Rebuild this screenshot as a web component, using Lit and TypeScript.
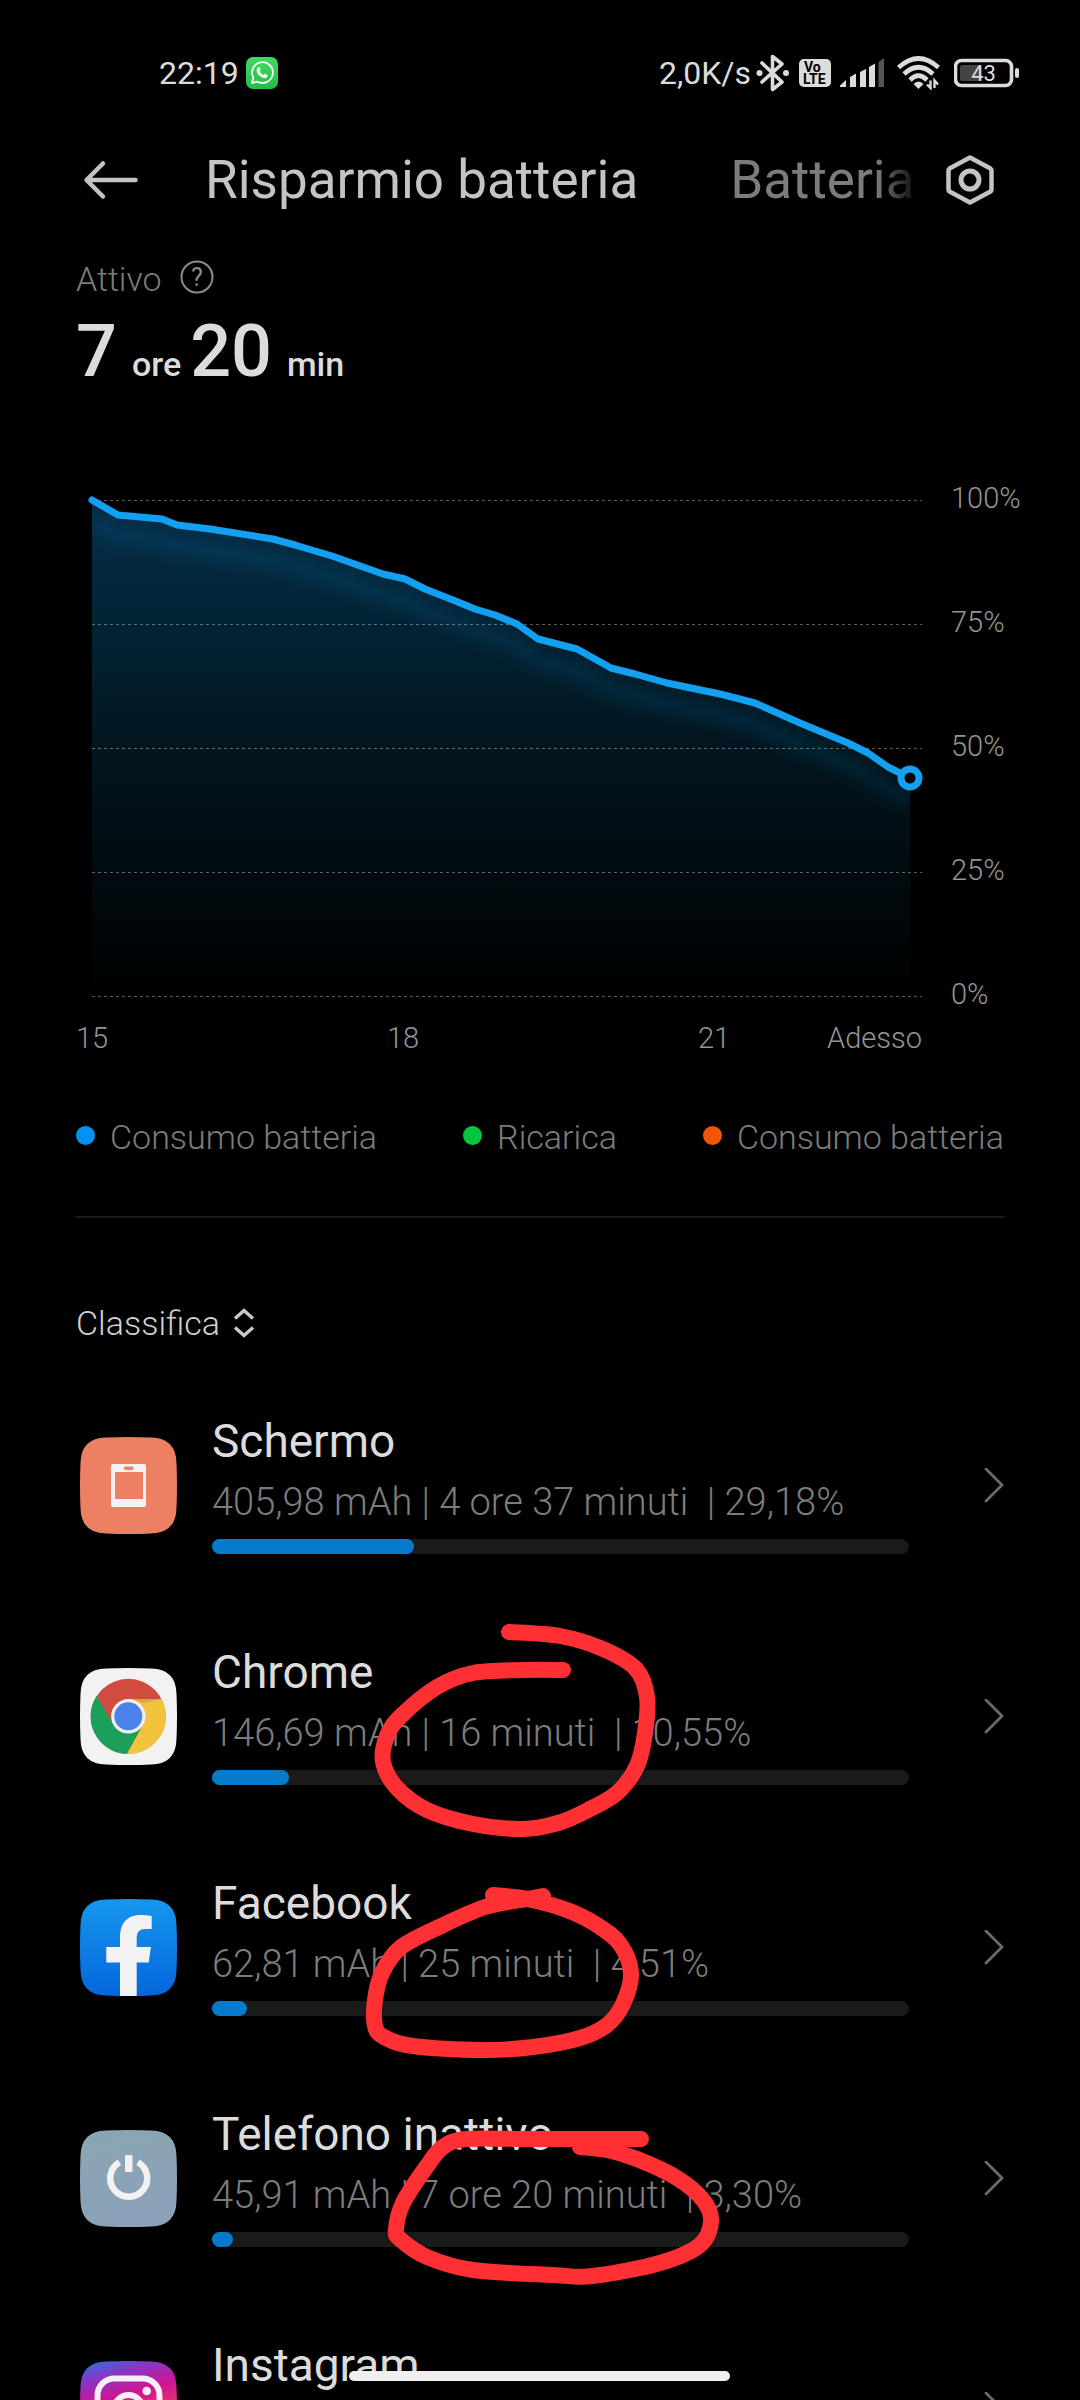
import { LitElement, html, css, svg } from "lit";
import { customElement, property } from "lit/decorators.js";

type Point = [number, number];

interface Usage {
  id: string;
  name: string;
  detail: string;
  share: number;
}

/** Battery level over time, in plot units (830 wide, 496 high). */
const LEVELS: Point[] = [
  [0, 0], [26, 15], [70, 19], [85, 25], [118, 29], [181, 39], [203, 45],
  [240, 56], [291, 74], [313, 79], [333, 89], [361, 100], [383, 109],
  [403, 115], [425, 124], [446, 139], [485, 149], [519, 168], [543, 174],
  [575, 183], [628, 194], [663, 203], [708, 223], [756, 243], [776, 253],
  [796, 267], [808, 273], [818, 278],
];

const USAGES: Usage[] = [
  { id: "screen", name: "Schermo", detail: "405,98 mAh | 4 ore 37 minuti  | 29,18%", share: 29 },
  { id: "chrome", name: "Chrome", detail: "146,69 mAh | 16 minuti  | 10,55%", share: 11 },
  { id: "facebook", name: "Facebook", detail: "62,81 mAh | 25 minuti  | 4,51%", share: 5 },
  { id: "idle", name: "Telefono inattivo", detail: "45,91 mAh | 7 ore 20 minuti  | 3,30%", share: 3 },
  { id: "instagram", name: "Instagram", detail: "", share: 2 },
];

/** Freehand marker strokes. */
const MARKS: Point[][] = [
  [
    [509, 1632], [560, 1636], [603, 1649], [636, 1669], [647, 1697], [645, 1733],
    [637, 1766], [617, 1793], [588, 1810], [558, 1823], [523, 1829], [473, 1824],
    [427, 1810], [397, 1788], [383, 1762], [387, 1736], [401, 1716], [437, 1687],
    [473, 1673], [523, 1670], [563, 1670],
  ],
  [
    [493, 1895], [527, 1899], [567, 1910], [597, 1925], [620, 1944], [631, 1973],
    [623, 2004], [607, 2025], [580, 2038], [533, 2047], [483, 2050], [413, 2046],
    [384, 2037], [375, 2026], [375, 2000], [382, 1973], [400, 1948], [437, 1928],
    [485, 1907], [527, 1899], [543, 1896],
  ],
  [
    [580, 2147], [607, 2150], [637, 2159], [677, 2178], [703, 2200], [711, 2221],
    [700, 2245], [660, 2263], [593, 2276], [553, 2275], [473, 2270], [427, 2257],
    [400, 2239], [396, 2229], [403, 2203], [427, 2166], [443, 2147], [467, 2139],
    [527, 2139], [641, 2139],
  ],
];

/** Joins the points with a Catmull-Rom curve, written as cubic segments. */
function smooth(points: Point[]): string {
  let d = `M${points[0][0]} ${points[0][1]}`;
  for (let i = 0; i < points.length - 1; i++) {
    const a = points[Math.max(i - 1, 0)];
    const b = points[i];
    const c = points[i + 1];
    const e = points[Math.min(i + 2, points.length - 1)];
    d += ` C${b[0] + (c[0] - a[0]) / 6} ${b[1] + (c[1] - a[1]) / 6}`;
    d += ` ${c[0] - (e[0] - b[0]) / 6} ${c[1] - (e[1] - b[1]) / 6} ${c[0]} ${c[1]}`;
  }
  return d;
}

@customElement("status-bar")
class StatusBar extends LitElement {
  static styles = css`
    :host { display: block; }
    .bar {
      display: flex;
      align-items: center;
      height: 38px;
      padding: 54px 60px 50px 159px;
      font-size: 32px;
      color: #dcdcdc;
    }
    .whatsapp { margin-left: 7px; }
    .space { flex: 1; }
    svg { display: block; flex: none; }
    .bluetooth { margin-left: 5px; }
    .volte { margin-left: 9px; }
    .signal { margin-left: 9px; }
    .wifi { margin-left: 12px; }
    .battery { margin-left: 14px; }
    .volte text { font: 700 14px Roboto, sans-serif; }
    .battery text { font: 400 22px Roboto, sans-serif; }
  `;

  render() {
    return html`
      <div class="bar">
        <span>22:19</span>
        <svg class="whatsapp" width="32" height="32" viewBox="0 0 32 32" aria-hidden="true">
          <defs>
            <linearGradient id="wa" x1="0" y1="0" x2="0" y2="1">
              <stop offset="0" stop-color="#45d765" /><stop offset="1" stop-color="#25bd45" />
            </linearGradient>
          </defs>
          <rect width="32" height="32" rx="7" fill="url(#wa)" />
          <path d="M6 26 L7.4 20.6 A10.4 10.4 0 1 1 11.4 24.6 Z" fill="none" stroke="#f2fff4" stroke-width="1.8" stroke-linejoin="round" />
          <path d="M12 10.4 c.5-.5 1.4-.4 1.7.2 l1 2.2 c.2.5-.5 1.2-.9 1.7 .8 1.7 2 2.8 3.7 3.5 .5-.5 1-1.4 1.6-1.2 l2.2 1.1 c.6.3.5 1 .2 1.6 -.7 1.4-2.3 1.9-3.8 1.5 -3.5-1-6.1-3.5-7-6.8 -.3-1.5.2-2.9 1.3-3.8z" fill="#f2fff4" />
        </svg>
        <span class="space"></span>
        <span>2,0K/s</span>
        <svg class="bluetooth" width="34" height="38" viewBox="0 0 34 38" aria-hidden="true">
          <path d="M6 9 L26 28 L16.5 35.5 V2.5 L26 10 L6 28" fill="none" stroke="#dcdcdc" stroke-width="3.6" stroke-linejoin="round" stroke-linecap="round" />
          <circle cx="3.5" cy="19" r="3" fill="#dcdcdc" /><circle cx="30" cy="19" r="3" fill="#dcdcdc" />
        </svg>
        <svg class="volte" width="32" height="28" viewBox="0 0 32 28" aria-label="VoLTE">
          <rect width="32" height="28" rx="5" fill="#dcdcdc" />
          <text x="5" y="13" fill="#000">Vo</text>
          <text x="4" y="25" fill="#000">LTE</text>
        </svg>
        <svg class="signal" width="45" height="30" viewBox="0 0 45 30" aria-hidden="true">
          <g fill="#dcdcdc">
            <path d="M0 29 V27.500 L6 22 V29Z" />
            <path d="M10 29 V19 L16 15.500 V29Z" />
            <path d="M20 29 V14 L26 11 V29Z" />
            <path d="M29 29 V9 L35 5.500 V29Z" />
          </g>
          <path d="M38.500 29 V4 L44 0 V29Z" fill="#555" />
        </svg>
        <svg class="wifi" width="43" height="34" viewBox="0 0 43 34" aria-hidden="true">
          <g fill="none" stroke="#dcdcdc" stroke-width="4.600">
            <path d="M1.500 11.500 Q21.500 -6.500 41.500 11.500" />
            <path d="M7 18 Q21.500 4.500 36 18" />
            <path d="M13 24 Q21.500 15.500 30 24" />
          </g>
          <path d="M16.500 28 Q21.500 23 26.500 28 L21.500 33Z" fill="#dcdcdc" />
          <path d="M33.500 24.500 V32 L30 28.500 M37.500 32 V24.500 L41 28.500" fill="none" stroke="#dcdcdc" stroke-width="2.400" />
        </svg>
        <svg class="battery" width="66" height="30" viewBox="0 0 66 30" aria-label="43%">
          <rect x="1.500" y="2.500" width="56" height="25" rx="6" fill="none" stroke="#dcdcdc" stroke-width="3.600" />
          <rect x="6" y="7" width="22" height="16" rx="2" fill="#444" />
          <rect x="61" y="10" width="4" height="10" rx="2" fill="#dcdcdc" />
          <text x="29.500" y="23" text-anchor="middle" fill="#dcdcdc">43</text>
        </svg>
      </div>
    `;
  }
}

@customElement("battery-chart")
class BatteryChart extends LitElement {
  static styles = css`
    :host { display: block; }
    .chart {
      display: grid;
      grid-template-columns: 1fr 129px;
      column-gap: 29px;
      padding-left: 92px;
      font-size: 29px;
      font-weight: 300;
      line-height: 36px;
      color: #949494;
    }
    svg { display: block; width: 100%; height: auto; overflow: visible; }
    .levels {
      display: flex;
      flex-direction: column;
      justify-content: space-between;
      margin: -20px 0 -16px;
    }
    .hours {
      display: grid;
      grid-template-columns: 311fr 311fr 224fr;
      margin: 24px 0 0 -16px;
    }
    .last { display: flex; justify-content: space-between; }
  `;

  render() {
    const line = "M" + LEVELS.map((p) => p.join(" ")).join(" L");
    const area = `${line} V496 H0 Z`;
    return html`
      <div class="chart">
        <svg viewBox="0 0 830 496" role="img" aria-label="Livello batteria">
          <defs>
            <linearGradient id="fade" gradientUnits="userSpaceOnUse" x1="0" y1="0" x2="0" y2="496">
              <stop offset="0" stop-color="#052f49" />
              <stop offset=".25" stop-color="#032335" />
              <stop offset=".5" stop-color="#02161f" />
              <stop offset="1" stop-color="#000" />
            </linearGradient>
            <clipPath id="under"><path d=${area} /></clipPath>
            <filter id="blur" x="-10%" y="-20%" width="120%" height="140%">
              <feGaussianBlur stdDeviation="7" />
            </filter>
          </defs>
          <path d=${area} fill="url(#fade)" />
          <g clip-path="url(#under)">
            <path d=${line} transform="translate(0 22)" fill="none" stroke="#14a0f0" stroke-opacity=".12" stroke-width="14" filter="url(#blur)" />
          </g>
          ${[0, 124, 248, 372, 496].map(
            (y) => svg`<path d="M0 ${y + 0.5} H830" stroke="#fff" stroke-opacity=".36" stroke-dasharray="3 3" />`
          )}
          <path d=${line} fill="none" stroke="#14a0f0" stroke-width="7" stroke-linejoin="round" stroke-linecap="round" />
          <circle cx="818" cy="278" r="9" fill="#000" stroke="#14a0f0" stroke-width="7" />
        </svg>
        <div class="levels">
          ${[100, 75, 50, 25, 0].map((n) => html`<span>${n}%</span>`)}
        </div>
        <div class="hours">
          <span>15</span><span>18</span>
          <span class="last"><span>21</span><span>Adesso</span></span>
        </div>
      </div>
    `;
  }
}

@customElement("app-icon")
class AppIcon extends LitElement {
  @property() name = "";

  static styles = css`
    :host { display: block; flex: none; }
    svg { display: block; }
  `;

  private art() {
    switch (this.name) {
      case "screen":
        return svg`
          <rect width="97" height="97" fill="#ed7f63" />
          <path fill="#f3f3f3" fill-rule="evenodd" d="M33 27 H64 a2 2 0 0 1 2 2 V68 a2 2 0 0 1 -2 2 H33 a2 2 0 0 1 -2 -2 V29 a2 2 0 0 1 2 -2Z M35 35 V62 H63 V35Z M45.500 29.500 a1.700 1.700 0 0 0 0 3.400 H52 a1.700 1.700 0 0 0 0 -3.400Z" />`;
      case "chrome":
        return svg`
          <rect width="97" height="97" fill="#f2f2f2" />
          <circle cx="48.300" cy="48.300" r="37.500" fill="#d04c40" />
          <path fill="#f2c43d" d="M48 31 H81.700 A37.700 37.700 0 0 1 46.700 86 L63 56.500Z" />
          <path fill="#e0a832" d="M48 31 H81.700 L64 35Z" />
          <path fill="#1d9f5c" d="M16.500 28 L33.600 56.500 L48 65 L63 56.500 L46.700 86 A37.700 37.700 0 0 1 16.500 28Z" />
          <circle cx="48.300" cy="48.300" r="17.200" fill="#f0f0f0" />
          <circle cx="48.300" cy="48.300" r="14" fill="#4a82e8" />`;
      case "facebook":
        return svg`
          <rect width="97" height="97" fill="url(#fb)" />
          <path fill="#f2f2f2" d="M40 97 V63.600 H26.300 V48 H40 V39 C40 23 48 16 61 16 Q67 16 71.700 17 V30 H66 C59 30 56.700 33 56.700 40 V48 H70.900 L68.700 63.600 H56.700 V97Z" />`;
      case "idle":
        return svg`
          <rect width="97" height="97" fill="url(#idle)" />
          <path d="M58 32.200 A18.500 18.500 0 1 1 39.500 32.200" fill="none" stroke="#f2f2f2" stroke-width="6.500" />
          <rect x="45" y="25" width="7.500" height="17" rx="1" fill="#f2f2f2" />`;
      default:
        return svg`
          <rect width="97" height="97" fill="url(#ig)" />
          <rect x="17.500" y="17.500" width="62" height="62" rx="17" fill="none" stroke="#f5eef7" stroke-width="6" />
          <circle cx="48.500" cy="48.500" r="14.500" fill="none" stroke="#f5eef7" stroke-width="6" />
          <circle cx="66.700" cy="30" r="4.300" fill="#f5eef7" />`;
    }
  }

  render() {
    return html`
      <svg width="97" height="97" viewBox="0 0 97 97" aria-hidden="true">
        <defs>
          <clipPath id="shape">
            <path d="M26 0.500 Q48.500 -.5 71 .5 Q96 1 96.500 26 Q97.500 48.500 96.500 71 Q96 96 71 96.500 Q48.500 97.500 26 96.500 Q1 96 .5 71 Q-.5 48.500 .5 26 Q1 1 26 .5Z" />
          </clipPath>
          <linearGradient id="fb" x1="0" y1="0" x2="0" y2="1">
            <stop offset="0" stop-color="#1697ee" /><stop offset="1" stop-color="#0566dc" />
          </linearGradient>
          <linearGradient id="idle" x1="0" y1="0" x2="0.300" y2="1">
            <stop offset="0" stop-color="#8aa6b1" /><stop offset="1" stop-color="#8ba1b9" />
          </linearGradient>
          <linearGradient id="ig" x1="0.150" y1="0" x2="0.400" y2="0.900">
            <stop offset="0" stop-color="#3a68dc" /><stop offset=".2" stop-color="#8a35c4" />
            <stop offset=".45" stop-color="#d0148f" /><stop offset="1" stop-color="#f5603c" />
          </linearGradient>
        </defs>
        <g clip-path="url(#shape)">${this.art()}</g>
      </svg>
    `;
  }
}

@customElement("usage-row")
class UsageRow extends LitElement {
  @property({ attribute: false }) usage!: Usage;

  static styles = css`
    :host { display: block; }
    .row {
      display: flex;
      align-items: center;
      height: 231px;
      padding: 0 76px 0 80px;
      color: #dcdcdc;
      text-decoration: none;
    }
    .body {
      flex: 1;
      min-width: 0;
      margin: 0 75px 0 35px;
      padding-bottom: 6px;
    }
    .name { font-size: 46px; line-height: 60px; }
    .detail {
      height: 44px;
      margin: 9px 0 15px;
      font-size: 38px;
      font-weight: 300;
      line-height: 44px;
      color: #7c7c7c;
      white-space: pre;
    }
    .track { height: 15px; border-radius: 8px; background: #1a1a1a; }
    .fill { height: 15px; border-radius: 8px; background: #067bcb; }
    .chevron { display: block; flex: none; }
  `;

  render() {
    const { id, name, detail, share } = this.usage;
    return html`
      <a class="row" href="#${id}">
        <app-icon name=${id}></app-icon>
        <div class="body">
          <div class="name">${name}</div>
          <div class="detail">${detail}</div>
          <div class="track"><div class="fill" style="width:${share}%"></div></div>
        </div>
        <svg class="chevron" width="20" height="36" viewBox="0 0 20 36" aria-hidden="true">
          <path d="M2 1 L18 17 L2 33" fill="none" stroke="#6a6a6a" stroke-width="2.800" stroke-linecap="round" stroke-linejoin="round" />
        </svg>
      </a>
    `;
  }
}

@customElement("app-root")
class AppRoot extends LitElement {
  static styles = css`
    :host {
      display: block;
      font-family: Roboto, "Noto Sans", sans-serif;
      background: #000;
    }
    .screen {
      position: relative;
      display: flex;
      flex-direction: column;
      height: 100vh;
      overflow: hidden;
    }
    button {
      display: block;
      flex: none;
      padding: 0;
      border: 0;
      background: none;
      color: inherit;
      font: inherit;
      cursor: pointer;
    }
    svg { display: block; flex: none; }
    .header {
      display: flex;
      align-items: center;
      flex: none;
      height: 76px;
      padding: 0 85px 0 83px;
    }
    .tabs {
      display: flex;
      flex: 1;
      gap: 92px;
      min-width: 0;
      margin: 0 25px 0 67px;
      overflow: hidden;
      font-size: 53px;
      line-height: 76px;
      color: #7c7c7c;
      white-space: nowrap;
      -webkit-mask-image: linear-gradient(to right, #000 calc(100% - 44px), transparent);
      mask-image: linear-gradient(to right, #000 calc(100% - 44px), transparent);
    }
    .active { color: #c4c4c4; }
    .content {
      flex: 1;
      min-height: 0;
      overflow-y: auto;
      scrollbar-width: none;
    }
    .state {
      display: flex;
      align-items: center;
      gap: 18px;
      height: 36px;
      margin: 43px 76px 0;
      font-size: 34px;
      font-weight: 300;
      color: #7c7c7c;
    }
    .state text { font: 400 25px Roboto, sans-serif; }
    .time {
      display: flex;
      align-items: baseline;
      height: 80px;
      margin: 15px 76px 108px;
      font-size: 72px;
      font-weight: 500;
      line-height: 80px;
      color: #dcdcdc;
    }
    .unit { margin: 0 9px 0 15px; font-size: 34px; line-height: 40px; }
    .legend {
      display: flex;
      justify-content: space-between;
      margin: 61px 76px 59px;
      padding: 0;
      list-style: none;
      font-size: 34px;
      font-weight: 300;
      line-height: 40px;
      color: #7c7c7c;
    }
    .key { display: flex; align-items: center; gap: 15px; }
    .dot { width: 19px; height: 19px; margin-bottom: 4px; border-radius: 50%; }
    .blue { background: #0092f4; }
    .green { background: #00c640; }
    .orange { background: #f45500; }
    .rule { height: 2px; margin: 0 76px; border: 0; background: #1c1c1c; }
    .sort {
      display: flex;
      align-items: center;
      gap: 13px;
      margin: 85px 76px 27px;
      font-size: 34px;
      font-weight: 300;
      line-height: 40px;
      color: #d0d0d0;
    }
    .home {
      position: absolute;
      bottom: 19px;
      left: 50%;
      width: 381px;
      height: 10px;
      margin-left: -191px;
      border-radius: 5px;
      background: #f0f0f0;
    }
    .marks {
      position: absolute;
      top: 0;
      left: 0;
      pointer-events: none;
    }
  `;

  render() {
    return html`
      <div class="screen">
        <status-bar></status-bar>
        <header class="header">
          <button aria-label="Indietro">
            <svg width="55" height="40" viewBox="0 0 55 40">
              <path d="M20 3.500 L3.500 20 L20 36.500 M4 20 H52.500" fill="none" stroke="#c4c4c4" stroke-width="4.500" stroke-linecap="round" stroke-linejoin="round" />
            </svg>
          </button>
          <nav class="tabs">
            <button class="active">Risparmio batteria</button>
            <button>Batteria</button>
          </nav>
          <button aria-label="Impostazioni">
            <svg width="50" height="52" viewBox="0 0 50 52">
              <path d="M25 3.500 L45.500 14.500 Q46.500 15.200 46.500 16.500 V35.500 Q46.500 36.800 45.500 37.500 L25 48.500 L4.500 37.500 Q3.500 36.800 3.500 35.500 V16.500 Q3.500 15.200 4.500 14.500Z" fill="none" stroke="#c4c4c4" stroke-width="4.500" stroke-linejoin="round" />
              <circle cx="25" cy="26" r="9" fill="none" stroke="#c4c4c4" stroke-width="5" />
            </svg>
          </button>
        </header>
        <main class="content">
          <div class="state">
            <span>Attivo</span>
            <button aria-label="Informazioni">
              <svg width="34" height="38" viewBox="0 0 34 38">
                <circle cx="17" cy="17" r="15.500" fill="none" stroke="#8c8c8c" stroke-width="2" />
                <text x="17" y="26" text-anchor="middle" fill="#8c8c8c">?</text>
              </svg>
            </button>
          </div>
          <div class="time">7<span class="unit">ore</span>20<span class="unit">min</span></div>
          <battery-chart></battery-chart>
          <ul class="legend">
            <li class="key"><span class="dot blue"></span>Consumo batteria</li>
            <li class="key"><span class="dot green"></span>Ricarica</li>
            <li class="key"><span class="dot orange"></span>Consumo batteria</li>
          </ul>
          <hr class="rule" />
          <button class="sort">
            Classifica
            <svg width="22" height="30" viewBox="0 0 22 30" aria-hidden="true">
              <path d="M2 10.500 L11 2.500 L20 10.500 M2 19.500 L11 27.500 L20 19.500" fill="none" stroke="#c8c8c8" stroke-width="3.400" />
            </svg>
          </button>
          ${USAGES.map((u) => html`<usage-row .usage=${u}></usage-row>`)}
        </main>
        <svg class="marks" width="1080" height="2400" viewBox="0 0 1080 2400" aria-hidden="true">
          ${MARKS.map(
            (m) => svg`<path d=${smooth(m)} fill="none" stroke="#ff3034" stroke-width="16" stroke-linecap="round" stroke-linejoin="round" />`
          )}
        </svg>
        <div class="home"></div>
      </div>
    `;
  }
}
